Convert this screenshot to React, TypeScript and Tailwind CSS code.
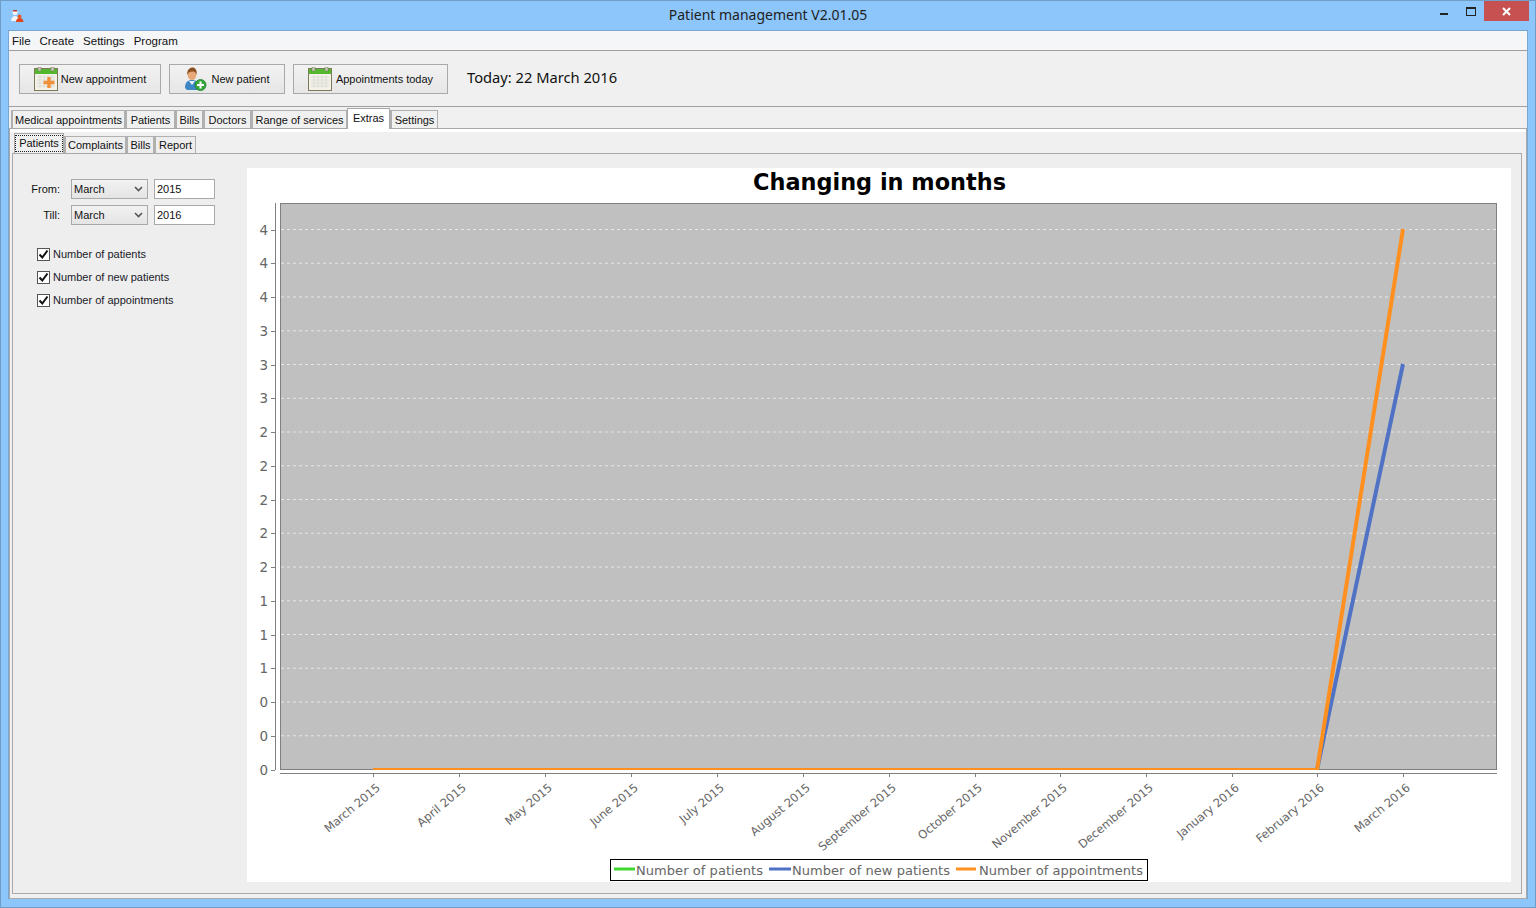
const ui = '"Liberation Sans", Arial, sans-serif';
const heading = '"Noto Sans", "Open Sans", sans-serif';

const mainTabs = [
  { label: 'Medical appointments', w: 'w-[114px]' },
  { label: 'Patients', w: 'w-[50px]' },
  { label: 'Bills', w: 'w-[28px]' },
  { label: 'Doctors', w: 'w-[48px]' },
  { label: 'Range of services', w: 'w-[96px]' },
  { label: 'Extras', w: 'w-[43px]', active: true },
  { label: 'Settings', w: 'w-[48px]' },
];

const subTabs = [
  { label: 'Complaints', w: 'w-[62px]' },
  { label: 'Bills', w: 'w-[28px]' },
  { label: 'Report', w: 'w-[42px]' },
];

const months = [
  'March 2015', 'April 2015', 'May 2015', 'June 2015', 'July 2015', 'August 2015', 'September 2015',
  'October 2015', 'November 2015', 'December 2015', 'January 2016', 'February 2016', 'March 2016',
];
const monthX = [126, 212, 298, 384, 470, 556, 642, 728, 813, 899, 985, 1070, 1156];
const yLabels = ['4', '4', '4', '3', '3', '3', '2', '2', '2', '2', '2', '1', '1', '1', '0', '0', '0'];

function CalendarIcon({ plus }: { plus?: boolean }) {
  return (
    <svg width="24" height="24" viewBox="0 0 24 24" className="shrink-0">
      <rect x="0.5" y="1.5" width="23" height="22" fill="#f3f1e8" stroke="#7d7a5c" />
      <rect x="1" y="2" width="22" height="5" fill="#53b82e" />
      <rect x="4" y="0" width="3" height="4" fill="#c9c9b8" stroke="#77775f" strokeWidth="0.5" />
      <rect x="17" y="0" width="3" height="4" fill="#c9c9b8" stroke="#77775f" strokeWidth="0.5" />
      <path d="M3 10h18M3 13h18M3 16h18M3 19h18M6 8v13M10 8v13M14 8v13M18 8v13" stroke="#dcdcd6" strokeWidth="1" />
      {plus && <path d="M15 10v11M9.5 15.5h11" stroke="#f0913a" strokeWidth="3.4" />}
    </svg>
  );
}

function PatientIcon() {
  return (
    <svg width="23" height="24" viewBox="0 0 23 24" className="shrink-0">
      <path d="M1 21c0-6 3-8 7-8s8 2 8 8l-3 2H3z" fill="#3f86c6" />
      <path d="M5 14l3 4 3-4z" fill="#e8eef5" />
      <ellipse cx="8" cy="7.5" rx="4.4" ry="5.5" fill="#e8a878" />
      <path d="M3.4 8C2.6 2.5 6 0.5 8.5 0.5S13.5 3 12.5 8C12 5 10 4.5 8 4.5S4 5.5 3.4 8z" fill="#8a4f1e" />
      <circle cx="16.5" cy="18" r="5.5" fill="#35a83a" stroke="#1e7f2a" strokeWidth="0.8" />
      <path d="M16.5 14.5v7M13 18h7" stroke="#fff" strokeWidth="2" />
    </svg>
  );
}

function AppIcon() {
  return (
    <svg width="14" height="14" viewBox="0 0 14 14">
      <path d="M1 12c0-3 2-5 4-5s3 1 3 3v2z" fill="#f4f4f4" />
      <circle cx="5" cy="3.5" r="2.5" fill="#f6f6f6" />
      <rect x="3" y="1" width="4" height="1.5" fill="#b8332a" />
      <circle cx="9.5" cy="7.5" r="2" fill="#e8572a" />
      <path d="M6 13c0-2.5 1.5-4 3.5-4S13.5 10.5 13.5 13z" fill="#e0461e" />
    </svg>
  );
}

function ToolButton({ icon, label, w, gap }: { icon: React.ReactNode; label: string; w: string; gap: string }) {
  return (
    <button className={`flex h-[30px] ${w} items-center justify-center ${gap} border border-[#a9a9a9] bg-gradient-to-b from-[#f2f2f2] to-[#e6e6e6] text-[11px] text-[#111]`}>
      {icon}
      <span className="mt-[1px] whitespace-nowrap">{label}</span>
    </button>
  );
}

function DateRow({ label, year }: { label: string; year: string }) {
  return (
    <div className="flex h-5 items-center">
      <span className="w-[37px] text-right text-[11px] text-[#111]">{label}</span>
      <div className="ml-[11px] flex h-5 w-[77px] items-center justify-between border border-[#a9a9a9] bg-gradient-to-b from-[#f2f2f2] to-[#e4e4e4] pl-[2px] pr-[4px] text-[11px] text-[#111]">
        <span>March</span>
        <svg width="9" height="6" viewBox="0 0 9 6">
          <path d="M1 1l3.5 3.5L8 1" fill="none" stroke="#555" strokeWidth="1.6" />
        </svg>
      </div>
      <div className="ml-[6px] flex h-5 w-[61px] items-center border border-[#a9a9a9] bg-white pl-[2px] text-[11px] text-[#111]">{year}</div>
    </div>
  );
}

function CheckRow({ label }: { label: string }) {
  return (
    <div className="flex h-[14px] items-center gap-[3px]">
      <div className="flex h-[13px] w-[13px] items-center justify-center border border-[#555] bg-white">
        <svg width="11" height="11" viewBox="0 0 11 11">
          <path d="M1.5 5.5l2.8 3L9.5 1.5" fill="none" stroke="#111" strokeWidth="2" />
        </svg>
      </div>
      <span className="whitespace-nowrap text-[11px] text-[#1a1a2a]">{label}</span>
    </div>
  );
}

function Chart() {
  const chartFont = '"DejaVu Sans", sans-serif';
  return (
    <svg width="1264" height="714" viewBox="0 0 1264 714" className="block">
      <defs>
        <clipPath id="plot">
          <rect x="34" y="36" width="1215" height="566" />
        </clipPath>
      </defs>
      <text x="632.5" y="22" textAnchor="middle" fontFamily={chartFont} fontWeight="700" fontSize="22.4" fill="#000">Changing in months</text>

      <rect x="33.5" y="35.5" width="1216" height="566" fill="#c0c0c0" stroke="#808080" />
      {yLabels.map((label, i) => {
        const y = 61.5 + i * 33.75;
        return (
          <g key={i}>
            {i < 16 && <line x1="34" x2="1249" y1={y} y2={y} stroke="#e6e6e6" strokeDasharray="3 3" />}
            <line x1="24" x2="28" y1={Math.round(y) + 0.5} y2={Math.round(y) + 0.5} stroke="#808080" />
            <text x="21" y={y + 5} textAnchor="end" fontFamily={chartFont} fontSize="13.5" fill="#666">{label}</text>
          </g>
        );
      })}

      <line x1="28.5" x2="28.5" y1="35" y2="602" stroke="#808080" />
      <line x1="33" x2="1250" y1="605.5" y2="605.5" stroke="#808080" />

      {months.map((m, i) => (
        <g key={m}>
          <line x1={monthX[i] + 0.5} x2={monthX[i] + 0.5} y1="606" y2="609" stroke="#808080" />
          <text
            transform={`translate(${monthX[i] + 8} 621) rotate(-40)`}
            textAnchor="end"
            fontFamily={chartFont}
            fontSize="11.6"
            fill="#666"
          >
            {m}
          </text>
        </g>
      ))}

      <g clipPath="url(#plot)">
        <path d="M1070 602 L1156 196" fill="none" stroke="#4f72c4" strokeWidth="4" />
        <path d="M126 602 H1070 L1156 61" fill="none" stroke="#ff9020" strokeWidth="4" />
      </g>

      <rect x="363.5" y="691.5" width="537" height="21" fill="#fff" stroke="#000" />
      <line x1="367" x2="388" y1="701" y2="701" stroke="#3ed62f" strokeWidth="3" />
      <text x="389" y="707" fontFamily={chartFont} fontSize="13" fill="#666" textLength="127">Number of patients</text>
      <line x1="522" x2="544" y1="701" y2="701" stroke="#4f72c4" strokeWidth="3" />
      <text x="545" y="707" fontFamily={chartFont} fontSize="13" fill="#666" textLength="158">Number of new patients</text>
      <line x1="709" x2="729" y1="701" y2="701" stroke="#ff9020" strokeWidth="3" />
      <text x="732" y="707" fontFamily={chartFont} fontSize="13" fill="#666" textLength="164">Number of appointments</text>
    </svg>
  );
}

export default function App() {
  return (
    <div className="flex h-[908px] w-[1536px] flex-col overflow-hidden border border-[#6f9ec9] bg-[#8cc6fb]" style={{ fontFamily: ui }}>
      {/* title bar */}
      <div className="relative flex h-[29px] shrink-0 items-center pl-[9px]">
        <AppIcon />
        <div className="absolute inset-x-0 top-[4px] text-center text-[14px] leading-5 text-[#222]" style={{ fontFamily: heading }}>Patient management V2.01.05</div>
        <div className="ml-auto flex h-[20px] items-start self-start">
          <div className="mr-[18px] mt-[12px] h-[2px] w-[8px] bg-[#222]" />
          <div className="mr-[8px] mt-[6px] h-[9px] w-[10px] border border-t-2 border-[#222]" />
          <div className="mr-[6px] flex h-[20px] w-[45px] items-center justify-center bg-[#c75050]">
            <svg width="9" height="9" viewBox="0 0 9 9">
              <path d="M1 1l7 7M8 1L1 8" stroke="#fff" strokeWidth="2" />
            </svg>
          </div>
        </div>
      </div>

      {/* client area */}
      <div className="mx-[7px] flex h-[869px] flex-col border border-b-0 border-[#7aa7d0] bg-[#f0f0f0]">
        <div className="flex h-[20px] shrink-0 items-center gap-[9px] border-b border-[#a0a0a0] bg-[#f5f6f7] pl-[3px] pt-[2px] text-[11.5px] text-[#111]">
          <span>File</span>
          <span>Create</span>
          <span>Settings</span>
          <span>Program</span>
        </div>

        <div className="flex h-[56px] shrink-0 items-center gap-[8px] border-b border-[#a0a0a0] pl-[10px] pt-[1px]">
          <ToolButton icon={<CalendarIcon plus />} label="New appointment" w="w-[142px]" gap="gap-[3px]" />
          <ToolButton icon={<PatientIcon />} label="New patient" w="w-[116px]" gap="gap-[4px]" />
          <ToolButton icon={<CalendarIcon />} label="Appointments today" w="w-[155px]" gap="gap-[4px]" />
          <span className="-mt-[3px] ml-[11px] text-[14.7px] text-[#111]" style={{ fontFamily: heading }}>Today: 22 March 2016</span>
        </div>

        <div className="flex min-h-0 flex-1 flex-col">
          <div className="flex h-[21px] shrink-0 items-end pl-[2px]">
            {mainTabs.map((t) =>
              t.active ? (
                <div key={t.label} className={`relative z-10 -mb-[1px] flex h-[21px] ${t.w} items-start justify-center whitespace-nowrap border border-b-0 border-[#a9a9a9] bg-white text-[11px] text-[#111]`}>
                  <span className="mt-[1px]">{t.label}</span>
                </div>
              ) : (
                <div key={t.label} className={`flex h-[18px] ${t.w} items-center justify-center whitespace-nowrap border border-b-0 border-l-2 border-[#b0b0b0] bg-[#f0f0f0] pt-[1px] text-[11px] text-[#111]`}>
                  {t.label}
                </div>
              ),
            )}
          </div>

          <div className="flex min-h-0 flex-1 flex-col border border-[#a9a9a9] bg-[#f0f0f0]">
            <div className="h-[3px] shrink-0 bg-white" />
            <div className="flex min-h-0 flex-1 flex-col pb-[4px] pl-[2px] pr-[4px] pt-[1px]">
              <div className="flex h-[20px] shrink-0 items-end pl-[2px]">
                <div className="relative z-10 flex h-[20px] w-[50px] items-start justify-center border border-b-0 border-[#a9a9a9] bg-[#f0f0f0] pt-[1px] text-[11px] text-[#111]">
                  <span className="border border-dotted border-[#222] px-[3px] leading-[15px]">Patients</span>
                </div>
                {subTabs.map((t) => (
                  <div key={t.label} className={`flex h-[17px] ${t.w} items-center justify-center whitespace-nowrap border border-b-0 border-l-2 border-[#b0b0b0] bg-[#eeeeee] text-[11px] text-[#111]`}>
                    {t.label}
                  </div>
                ))}
              </div>

              <div className="flex min-h-0 flex-1 border border-[#a9a9a9] bg-[#eeeeee]">
                <div className="w-[234px] shrink-0 pl-[10px] pt-[25px]">
                  <div className="flex flex-col gap-[6px]">
                    <DateRow label="From:" year="2015" />
                    <DateRow label="Till:" year="2016" />
                  </div>
                  <div className="ml-[14px] mt-[22px] flex flex-col gap-[9px]">
                    <CheckRow label="Number of patients" />
                    <CheckRow label="Number of new patients" />
                    <CheckRow label="Number of appointments" />
                  </div>
                </div>
                <div className="mt-[14px] h-[714px] w-[1264px] shrink-0 bg-white">
                  <Chart />
                </div>
              </div>
            </div>
          </div>
        </div>
      </div>
    </div>
  );
}
